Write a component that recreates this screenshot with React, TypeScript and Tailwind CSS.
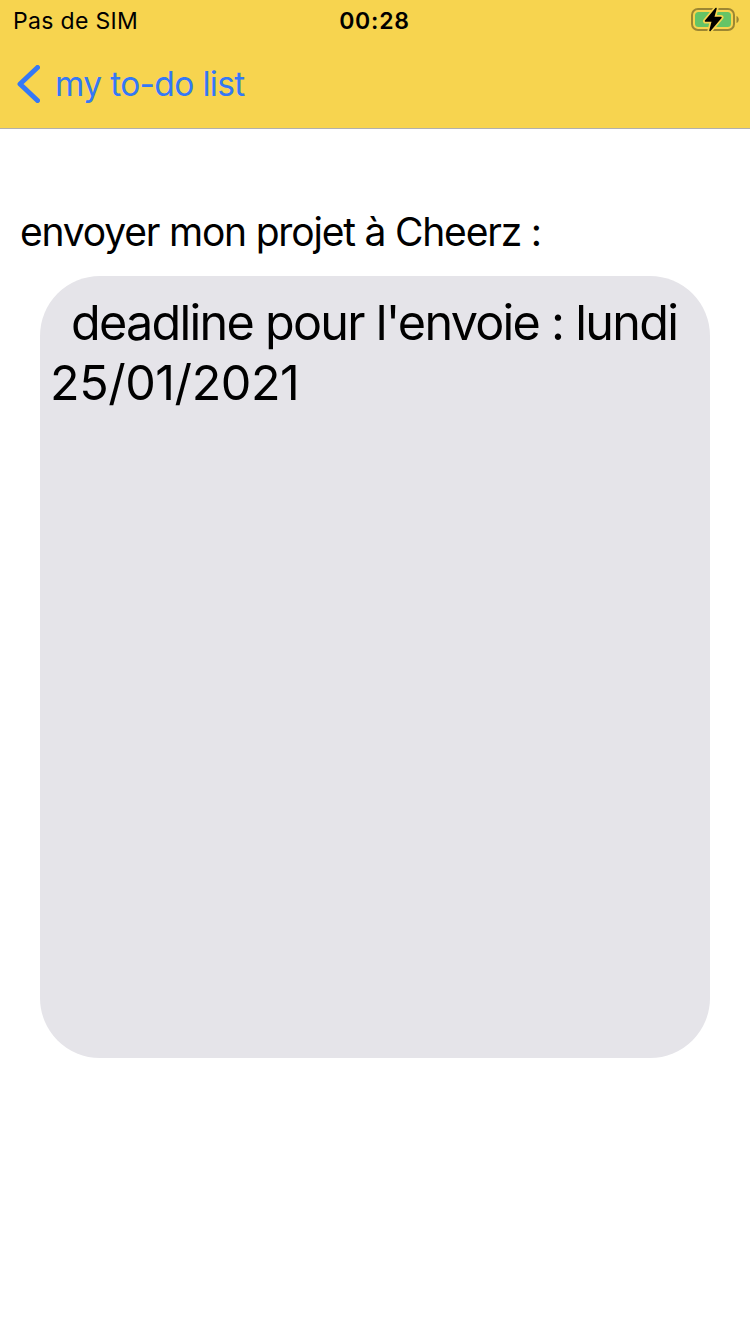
export default function App() {
  return (
    <div className="flex h-[1334px] w-[750px] flex-col overflow-hidden bg-white font-['Inter',sans-serif] text-black">
      <header className="h-[129px] border-b border-[#b1b0ae] bg-[#f7d44f]">
        <div className="grid h-10 grid-cols-3 items-start pl-[13px] pr-[11px]">
          <span className="pt-px text-[23px] leading-10 tracking-[0.32px] whitespace-nowrap">Pas de SIM</span>
          <span className="pt-px pr-[3px] text-center text-[23px] leading-10 font-semibold tracking-[0.8px]">00:28</span>
          <svg className="mt-[7px] justify-self-end" width="48" height="26" viewBox="0 0 48 26" fill="none">
            <rect x="1" y="2" width="42" height="21" rx="6" stroke="#9c8632" strokeWidth="2" />
            <rect x="4" y="5" width="36" height="15" rx="3.5" fill="#65c466" />
            <path d="M45.500 9v7c3-1 3-6 0-7z" fill="#9c8632" />
            <path d="M25 1.500 14.500 14h7l-2.500 9.500 11-13h-7.500z" stroke="#f7d44f" strokeWidth="5" strokeLinejoin="round" />
            <path d="M25 1.500 14.500 14h7l-2.500 9.500 11-13h-7.500z" fill="#000" stroke="#000" strokeWidth="1.500" strokeLinejoin="round" />
          </svg>
        </div>
        <nav className="flex h-[88px] items-center gap-[15px] pl-[17px] text-[#3478f6]">
          <svg width="23" height="38" viewBox="0 0 23 38" fill="none">
            <path d="M20.500 2.500 3 19l17.500 16.500" stroke="currentColor" strokeWidth="5" strokeLinecap="round" strokeLinejoin="round" />
          </svg>
          <span className="text-[33.500px] leading-10 tracking-[-0.65px] whitespace-nowrap">my to-do list</span>
        </nav>
      </header>
      <main className="flex flex-col pt-[79px]">
        <h1 className="pl-5 text-[39px] leading-[48px] tracking-[-1.2px] whitespace-nowrap">envoyer mon projet à Cheerz :</h1>
        <section className="mx-10 mt-5 h-[782px] rounded-[60px] bg-[#e5e4e9] px-[10px] pt-[17px] text-[48.500px] leading-[60px]">
          <p className="pl-[21px] tracking-[-1.72px] whitespace-nowrap">deadline pour l'envoie : lundi</p>
          <p className="tracking-[-0.45px] whitespace-nowrap">25/01/2021</p>
        </section>
      </main>
    </div>
  );
}
